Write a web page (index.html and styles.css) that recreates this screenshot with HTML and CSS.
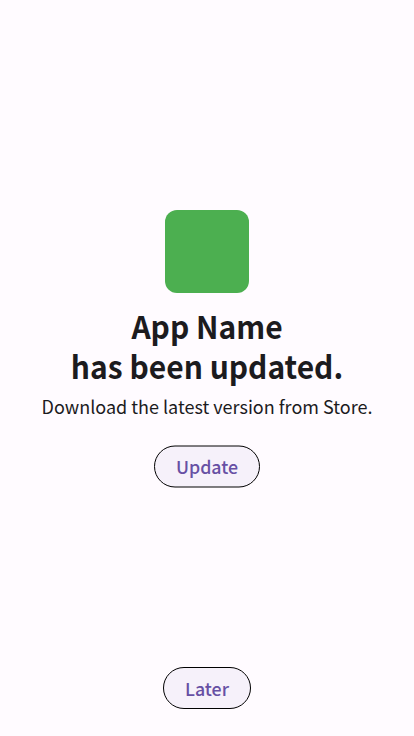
FILE: index.html
```html
<!DOCTYPE html>
<html lang="en">
<head>
<meta charset="utf-8">
<title>App update</title>
<link rel="stylesheet" href="styles.css">
</head>
<body>
<main class="screen">
<div class="app-icon"></div>
<h1 class="title"><span>App Name</span><span>has been updated.</span></h1>
<p class="message">Download the latest version from Store.</p>
<button class="button update">Update</button>
<button class="button later">Later</button>
</main>
</body>
</html>
```
FILE: styles.css
```css
* { box-sizing: border-box; }
body { margin: 0; background: #fffbff; }
.screen {
  display: flex;
  flex-direction: column;
  align-items: center;
  height: 736px;
  padding: 209.7px 0 27px;
  overflow: hidden;
  color: #1c1b1e;
  font-family: "Noto Sans CJK JP", sans-serif;
  white-space: nowrap;
}
.app-icon { flex: none; width: 84px; height: 83.6px; border-radius: 12px; background: #4caf50; }
.title { margin: 11.7px 0 0; font-size: 30px; line-height: 38px; font-weight: 700; text-align: center; transform: scaleY(1.053); transform-origin: top; }
.title span { display: block; }
.message { margin: 12px 0 0; font-size: 18px; line-height: 26px; }
.button {
  flex: none;
  height: 42px;
  padding: 0;
  border: 1px solid #000;
  border-radius: 21px;
  background: #f6f1fa;
  color: #6750a4;
  font: 500 17.8px/40px "Noto Sans CJK JP", sans-serif;
}
.update { width: 106px; margin-top: 26px; padding-bottom: 2px; line-height: 38px; transform: translateY(0.5px); }
.later { width: 88px; margin-top: auto; }
```
